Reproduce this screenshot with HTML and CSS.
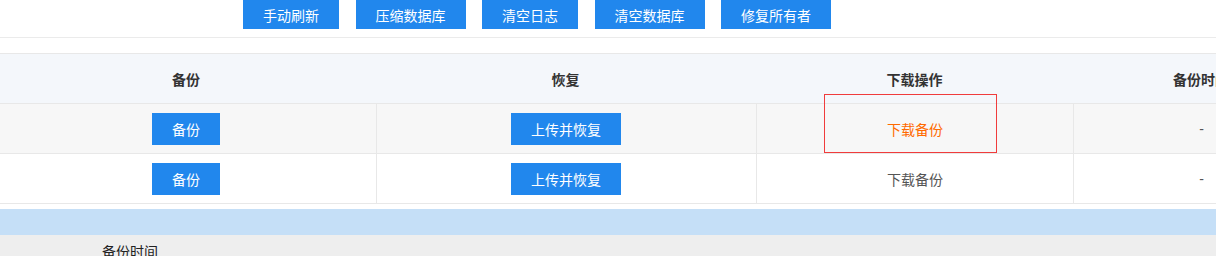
FILE: index.html
```html
<!DOCTYPE html>
<html lang="zh-CN">
<head>
    <meta charset="UTF-8">
    <title>数据库备份</title>
    <link rel="stylesheet" href="styles.css">
</head>
<body>
<div class="toolbar">
    <button class="btn">手动刷新</button>
    <button class="btn">压缩数据库</button>
    <button class="btn">清空日志</button>
    <button class="btn">清空数据库</button>
    <button class="btn">修复所有者</button>
</div>

<div class="table">
    <div class="table__row table__row_head">
        <div class="table__cell table__cell_c1">备份</div>
        <div class="table__cell table__cell_c2">恢复</div>
        <div class="table__cell table__cell_c3">下载操作</div>
        <div class="table__cell table__cell_c4">备份时间</div>
    </div>
    <div class="table__row table__row_odd">
        <div class="table__cell table__cell_c1"><button class="btn btn_small">备份</button></div>
        <div class="table__cell table__cell_c2"><button class="btn btn_small">上传并恢复</button></div>
        <div class="table__cell table__cell_c3"><a class="link link_active">下载备份</a></div>
        <div class="table__cell table__cell_c4">-</div>
    </div>
    <div class="table__row">
        <div class="table__cell table__cell_c1"><button class="btn btn_small">备份</button></div>
        <div class="table__cell table__cell_c2"><button class="btn btn_small">上传并恢复</button></div>
        <div class="table__cell table__cell_c3"><a class="link">下载备份</a></div>
        <div class="table__cell table__cell_c4">-</div>
    </div>
</div>

<div class="bar"></div>
<div class="panel">
    <div class="panel__label">备份时间</div>
</div>

<div class="mark"></div>
</body>
</html>
```

FILE: styles.css
```css
* {
    box-sizing: border-box;
    font-family: "Liberation Sans", "Noto Sans CJK SC", sans-serif;
}
body {
    margin: 0;
    overflow: hidden;
    background: #fff;
    position: relative;
}
.toolbar {
    display: flex;
    gap: 16.5px;
    height: 38px;
    padding-left: 243px;
    border-bottom: 1px solid #ebebeb;
}
.btn {
    height: 29px;
    padding: 0 20px;
    color: #fff;
    font-size: 14px;
    border: 0;
    background-color: #2187ed;
    cursor: pointer;
}
.btn_small {
    height: 32px;
}
.table {
    width: 1329px;
    margin-top: 15px;
    border-top: 1px solid #e8e8e8;
}
.table__row {
    display: flex;
    height: 50px;
    border-bottom: 1px solid #e8e8e8;
}
.table__row_head {
    background: #f4f7fb;
    font-weight: bold;
}
.table__row_odd {
    background: #f7f7f7;
}
.table__cell {
    display: flex;
    align-items: center;
    justify-content: center;
    font-size: 14px;
    color: #555;
}
.table__row_head .table__cell {
    color: #333;
}
.table__cell_c1 {
    width: 376px;
    padding-right: 4px;
}
.table__cell_c2 {
    width: 380px;
    padding-right: 1px;
}
.table__cell_c3 {
    width: 317px;
}
.table__cell_c4 {
    width: 256px;
}
.table__row:not(.table__row_head) .table__cell + .table__cell {
    border-left: 1px solid #e8e8e8;
}
.link {
    color: #555;
    text-decoration: none;
    cursor: pointer;
}
.link_active {
    color: #ff6a00;
}
.bar {
    height: 26px;
    margin-top: 5px;
    background: #c5dff7;
}
.panel {
    height: 40px;
    padding: 6px 0 0 102px;
    background: #eee;
}
.panel__label {
    color: #222;
    font-size: 14px;
}
.mark {
    position: absolute;
    left: 824px;
    top: 94px;
    width: 173px;
    height: 59px;
    border: 1px solid #f03c3c;
}
```
